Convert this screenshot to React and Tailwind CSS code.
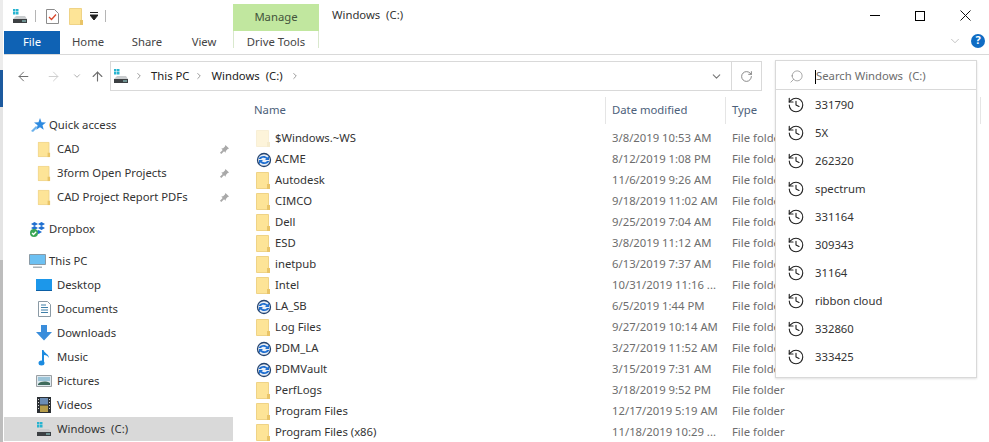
import React from 'react'
import { ArrowLeft, ArrowRight, ArrowUp, ChevronDown, ChevronRight, History, RotateCw, Search } from 'lucide-react'

const files = [
  ['$Windows.~WS', '3/8/2019 10:53 AM', 'ghost'],
  ['ACME', '8/12/2019 1:08 PM', 'sync'],
  ['Autodesk', '11/6/2019 9:26 AM', 'folder'],
  ['CIMCO', '9/18/2019 11:02 AM', 'folder'],
  ['Dell', '9/25/2019 7:04 AM', 'folder'],
  ['ESD', '3/8/2019 11:12 AM', 'folder'],
  ['inetpub', '6/13/2019 7:37 AM', 'folder'],
  ['Intel', '10/31/2019 11:16 ...', 'folder'],
  ['LA_SB', '6/5/2019 1:44 PM', 'sync'],
  ['Log Files', '9/27/2019 10:14 AM', 'folder'],
  ['PDM_LA', '3/27/2019 11:52 AM', 'sync'],
  ['PDMVault', '3/15/2019 7:31 AM', 'sync'],
  ['PerfLogs', '3/18/2019 9:52 PM', 'folder'],
  ['Program Files', '12/17/2019 5:19 AM', 'folder'],
  ['Program Files (x86)', '11/18/2019 10:29 ...', 'folder'],
]

const history = ['331790', '5X', '262320', 'spectrum', '331164', '309343', '31164', 'ribbon cloud', '332860', '333425']

function Folder({ ghost, className = '' }) {
  return (
    <svg width="14" height="17" viewBox="0 0 14 17" className={`shrink-0 ${className}`}>
      <path d="M.5.500h12v16H.5z" fill={ghost ? '#fdf4da' : '#fde497'} stroke={ghost ? '#f8efd6' : '#efd386'} />
      <path d="M11 12h3v5h-3z" fill={ghost ? '#f5ebcd' : '#e9c468'} />
    </svg>
  )
}

function SyncIcon() {
  return (
    <svg width="16" height="16" viewBox="0 0 16 16" className="shrink-0">
      <circle cx="8" cy="8" r="6.500" fill="#e8eef6" stroke="#23436f" strokeWidth="1.300" />
      <path d="M2.500 7C4 3.500 9 3 11.500 5.500L13 4v4H9l1.300-1.300C8.500 5.300 6 5.500 5 7z" fill="#1f6fd0" />
      <path d="M13.500 9C12 12.500 7 13 4.500 10.500L3 12V8h4L5.700 9.300C7.500 10.700 10 10.500 11 9z" fill="#1f6fd0" />
    </svg>
  )
}

function Drive({ className }) {
  return (
    <svg width="16" height="16" viewBox="0 0 16 16" className={className}>
      <path d="M1 1h2.500v2.500H1zM4 1h2.500v2.500H4zM1 4h2.500v2.500H1zM4 4h2.500v2.500H4z" fill="#27b4d0" />
      <path d="M4 8h9l2 3H1z" fill="#c9ccce" />
      <path d="M1 11h14v4H1z" fill="#3c4043" />
      <path d="M10 12.500h4v1h-4z" fill="#9fe3e0" />
    </svg>
  )
}

function Pin() {
  return (
    <svg width="11" height="11" viewBox="0 0 12 12" className="shrink-0">
      <path d="M7 1l4 4-1.500.5-2 2-.3 2L5.500 8 2.500 11 1 9.500 4 6.500 2.500 5l2-.3 2-2z" fill="#a9a9a9" />
    </svg>
  )
}

function NavIcon({ name }) {
  if (name === 'star') return (
    <svg width="15" height="14" viewBox="0 0 15 14" className="ml-[2px]"><path d="M9 0l1.500 4.200L15 4.500l-3.500 2.800 1.200 4.500L9 9.200 5.300 11.800l1.300-4.500L3 4.500l4.500-.3z" fill="#2f8be0" /><path d="M0 13l5-5 1.500 1.500L2 14z" fill="#6cb2ec" /></svg>
  )
  if (name === 'dropbox') return (
    <svg width="17" height="17" viewBox="0 0 17 17"><path d="M2 3l3.500-2L9 3 5.500 5zM9 3l3.500-2L16 3l-3.500 2zM2 7l3.500-2L9 7 5.500 9zM9 7l3.500-2L16 7l-3.500 2zM6 11l3.500-2 3.500 2-3.500 2z" fill="#1f6fd0" /><circle cx="5" cy="12" r="4" fill="#3aa655" /><path d="M3 12l1.500 1.500L7.200 10.700" fill="none" stroke="#fff" strokeWidth="1.300" /></svg>
  )
  if (name === 'pc') return (
    <svg width="17" height="16" viewBox="0 0 17 16"><path d="M.5 1.500h16v10H.5z" fill="#6cc0f2" stroke="#8a9aa5" /><path d="M4 13.500h9V15H4z" fill="#a9b2b8" /></svg>
  )
  if (name === 'desktop') return (
    <svg width="16" height="12" viewBox="0 0 16 12"><path d="M0 0h16v11H0z" fill="#1c97ea" /><path d="M0 11h16v1H0z" fill="#0b5fa5" /></svg>
  )
  if (name === 'documents') return (
    <svg width="13" height="16" viewBox="0 0 13 16" className="ml-[2px]"><path d="M.5.500h9l3 3v12H.5z" fill="#fff" stroke="#8b9aa5" /><path d="M3 4h5M3 6.500h7M3 9h7M3 11.500h7" stroke="#3f7fa8" /></svg>
  )
  if (name === 'downloads') return (
    <svg width="16" height="16" viewBox="0 0 16 16"><path d="M5 0h6v7h5l-8 8.500L0 7h5z" fill="#3a8ddb" /></svg>
  )
  if (name === 'music') return (
    <svg width="12" height="17" viewBox="0 0 12 17" className="ml-[2px]"><path d="M4 1h1.500c.5 3 5.500 4 5.500 8-1-2-3-3-5-3v8H4z" fill="#1c8be0" /><ellipse cx="3.500" cy="14" rx="3" ry="2.500" fill="#1c8be0" /></svg>
  )
  if (name === 'pictures') return (
    <svg width="16" height="12" viewBox="0 0 16 12"><path d="M.5.500h15v11H.5z" fill="#dfe9ef" stroke="#9a9fa3" /><path d="M2 2h12v4H2z" fill="#9cc4d8" /><path d="M2 9c3-3 8-3 12-1v2H2z" fill="#3f6b5d" /></svg>
  )
  if (name === 'videos') return (
    <svg width="14" height="16" viewBox="0 0 14 16" className="ml-[1px]"><path d="M0 0h14v16H0z" fill="#2b2f33" /><path d="M3 1h8v6.500H3z" fill="#6c8db5" /><path d="M3 8.500h8V15H3z" fill="#b59c4a" /><path d="M1 2h1v1H1zM1 5h1v1H1zM1 8h1v1H1zM1 11h1v1H1zM12 2h1v1h-1zM12 5h1v1h-1zM12 8h1v1h-1zM12 11h1v1h-1z" fill="#ddd" /></svg>
  )
  return null
}

function NavRow({ label, icon, top, pin, active }) {
  return (
    <div className={`h-[24px] flex items-center ${top ? 'pl-[25px]' : 'pl-[32px]'} ${active ? 'bg-[#d9d9d9]' : ''}`}>
      <span className={`${top ? 'w-[20px]' : 'w-[21px]'} shrink-0 flex items-center`}>{icon}</span>
      <span className="text-[#333] whitespace-pre">{label}</span>
      {pin && <span className="ml-auto mr-[3px]"><Pin /></span>}
    </div>
  )
}

function FileRow({ name, date, kind }) {
  return (
    <div className="h-[21px] grid grid-cols-[21px_337px_120px_1fr] items-center pl-[18px] whitespace-nowrap">
      <span className="flex items-center pl-[2px]">{kind === 'sync' ? <SyncIcon /> : <Folder ghost={kind === 'ghost'} />}</span>
      <span className="text-[#333]">{name}</span>
      <span className="text-[#6d6d6d]">{date}</span>
      <span className="text-[#6d6d6d]">File folder</span>
    </div>
  )
}

export default function App() {
  return (
    <div className="relative w-[989px] h-[442px] overflow-hidden bg-white text-[11.3px] flex font-['Noto_Sans','Open_Sans',sans-serif]">
      <div className="w-[3px] mr-px shrink-0 flex flex-col">
        <div className="h-[70px] bg-[#ececec]" />
        <div className="h-[37px] bg-[#1d5a9e]" />
        <div className="h-[153px] bg-[#e4e4e4]" />
        <div className="flex-1 bg-[#bdbdbd]" />
      </div>
      <div className="flex-1 min-w-0 flex flex-col">
        {/* title bar */}
        <div className="h-[31px] flex">
          <div className="w-[229px] flex items-center pl-[8px] pt-[1px]">
            <Drive />
            <div className="ml-[7px] w-px h-[12px] bg-[#b5b5b5]" />
            <svg width="13" height="15" viewBox="0 0 13 15" className="ml-[10px]"><path d="M.5.500h8l4 4v10H.5z" fill="#fff" stroke="#8c8c8c" /><path d="M3 8l2.500 2.500L10 5.500" fill="none" stroke="#d9482b" strokeWidth="1.300" /></svg>
            <Folder className="ml-[10px]" />
            <svg width="8" height="9" viewBox="0 0 8 9" className="ml-[7px]"><path d="M0 .5h8M0 3h8L4 8z" fill="#222" stroke="#222" strokeWidth="1" /></svg>
            <div className="ml-[7px] w-px h-[12px] bg-[#b5b5b5]" />
          </div>
          <div className="w-[86px] mt-[4px] bg-[#c1e79f] text-[#44543c] flex items-center justify-center">Manage</div>
          <div className="pl-[13px] pt-[7px] text-[#333] whitespace-pre">Windows  (C:)</div>
          <div className="ml-auto flex items-center pr-[18px] gap-[35px]">
            <div className="w-[10px] h-px bg-black" />
            <div className="w-[10px] h-[10px] border border-black" />
            <svg width="11" height="11" viewBox="0 0 11 11"><path d="M.5.500l10 10M10.500.500l-10 10" stroke="#111" /></svg>
          </div>
        </div>
        {/* ribbon tabs */}
        <div className="h-[24px] flex border-b border-[#d9d9d9] items-start">
          <div className="w-[56px] h-[23px] bg-[#0f62b4] text-white flex items-center justify-center">File</div>
          <div className="w-[56px] h-[23px] flex items-center justify-center text-[#444]">Home</div>
          <div className="w-[56px] ml-[3px] h-[23px] flex items-center justify-center text-[#444]">Share</div>
          <div className="w-[56px] ml-px h-[23px] flex items-center justify-center text-[#444] mr-px">View</div>
          <div className="w-[86px] h-[17px] pt-[6px] border-x border-[#d9e8cd] flex items-center justify-center text-[#444]">Drive Tools</div>
          <div className="ml-auto flex items-center gap-[9px] pr-[4px] h-[19px]">
            <ChevronDown size={14} strokeWidth={1} className="text-[#9a9a9a]" />
            <div className="w-[14px] h-[14px] rounded-full bg-[#0f6cc4] text-white text-[11px] font-bold flex items-center justify-center">?</div>
          </div>
        </div>
        {/* nav row */}
        <div className="h-[41px] flex items-center pt-[1px]">
          <div className="w-[106px] flex items-center pl-[12px] text-[#6e6e6e]">
            <ArrowLeft size={15} strokeWidth={1.6} />
            <ArrowRight size={15} strokeWidth={1.6} className="ml-[15px] text-[#cfcfcf]" />
            <ChevronDown size={10} strokeWidth={2} className="ml-[11px] text-[#a0a0a0]" />
            <ArrowUp size={15} strokeWidth={1.8} className="ml-[8px]" />
          </div>
          <div className="w-[652px] h-[30px] border border-[#d9d9d9] flex items-center">
            <Drive className="ml-[2px]" />
            <ChevronRight size={10} strokeWidth={1.8} className="ml-[5px] text-[#777]" />
            <span className="ml-[7px] text-[#222]">This PC</span>
            <ChevronRight size={10} strokeWidth={1.8} className="ml-[4px] text-[#777]" />
            <span className="ml-[8px] text-[#222] whitespace-pre">Windows  (C:)</span>
            <ChevronRight size={10} strokeWidth={1.8} className="ml-[7px] text-[#777]" />
            <ChevronDown size={13} strokeWidth={2} className="ml-auto mr-[8px] text-[#777]" />
            <div className="w-[30px] h-full border-l border-[#d9d9d9] flex items-center justify-center">
              <RotateCw size={13} strokeWidth={1.6} className="text-[#777]" />
            </div>
          </div>
        </div>
        {/* body */}
        <div className="flex-1 min-h-0 flex overflow-hidden">
          <div className="w-[229px] shrink-0 pt-[17px]">
            <NavRow label="Quick access" icon={<NavIcon name="star" />} top />
            <NavRow label="CAD" icon={<Folder className="ml-[1px] scale-90" />} pin />
            <NavRow label="3form Open Projects" icon={<Folder className="ml-[1px] scale-90" />} pin />
            <NavRow label="CAD Project Report PDFs" icon={<Folder className="ml-[1px] scale-90" />} pin />
            <div className="h-[8px]" />
            <NavRow label="Dropbox" icon={<NavIcon name="dropbox" />} top />
            <div className="h-[8px]" />
            <NavRow label="This PC" icon={<NavIcon name="pc" />} top />
            <NavRow label="Desktop" icon={<NavIcon name="desktop" />} />
            <NavRow label="Documents" icon={<NavIcon name="documents" />} />
            <NavRow label="Downloads" icon={<NavIcon name="downloads" />} />
            <NavRow label="Music" icon={<NavIcon name="music" />} />
            <NavRow label="Pictures" icon={<NavIcon name="pictures" />} />
            <NavRow label="Videos" icon={<NavIcon name="videos" />} />
            <NavRow label="Windows  (C:)" icon={<Drive />} active />
          </div>
          <div className="flex-1 min-w-0 pl-[3px]">
            <div className="h-[28px] grid grid-cols-[370px_120px_255px] text-[#4c607a] pt-[1px]">
              <div className="pl-[18px] flex items-center border-r border-[#e5e5e5]">Name</div>
              <div className="pl-[6px] flex items-center border-r border-[#e5e5e5]">Date modified</div>
              <div className="pl-[6px] flex items-center border-r border-[#e5e5e5]">Type</div>
            </div>
            <div className="pt-[4px]">
              {files.map((f) => <FileRow key={f[0]} name={f[0]} date={f[1]} kind={f[2]} />)}
            </div>
          </div>
        </div>
      </div>
      {/* search box + recent searches overlay */}
      <div className="absolute left-[775px] top-[60px] w-[202px] bg-white border border-[#d9d9d9] shadow-[0_1px_2px_rgba(0,0,0,0.12)]">
        <div className="h-[29px] border-b border-[#d9d9d9] flex items-center pt-[3px]">
          <Search size={15} strokeWidth={1} className="ml-[13px] -scale-x-100 text-[#777]" />
          <div className="ml-[11px] w-px h-[14px] bg-black" />
          <span className="text-[#6d6d6d] whitespace-pre">Search Windows  (C:)</span>
        </div>
        <div className="pt-[1px] pb-[6px]">
          {history.map((h) => (
            <div key={h} className="h-[28px] flex items-center pl-[11px] text-[#333]">
              <History size={18} strokeWidth={1.5} className="text-[#222]" />
              <span className="ml-[10px] whitespace-nowrap">{h}</span>
            </div>
          ))}
        </div>
      </div>
    </div>
  )
}
